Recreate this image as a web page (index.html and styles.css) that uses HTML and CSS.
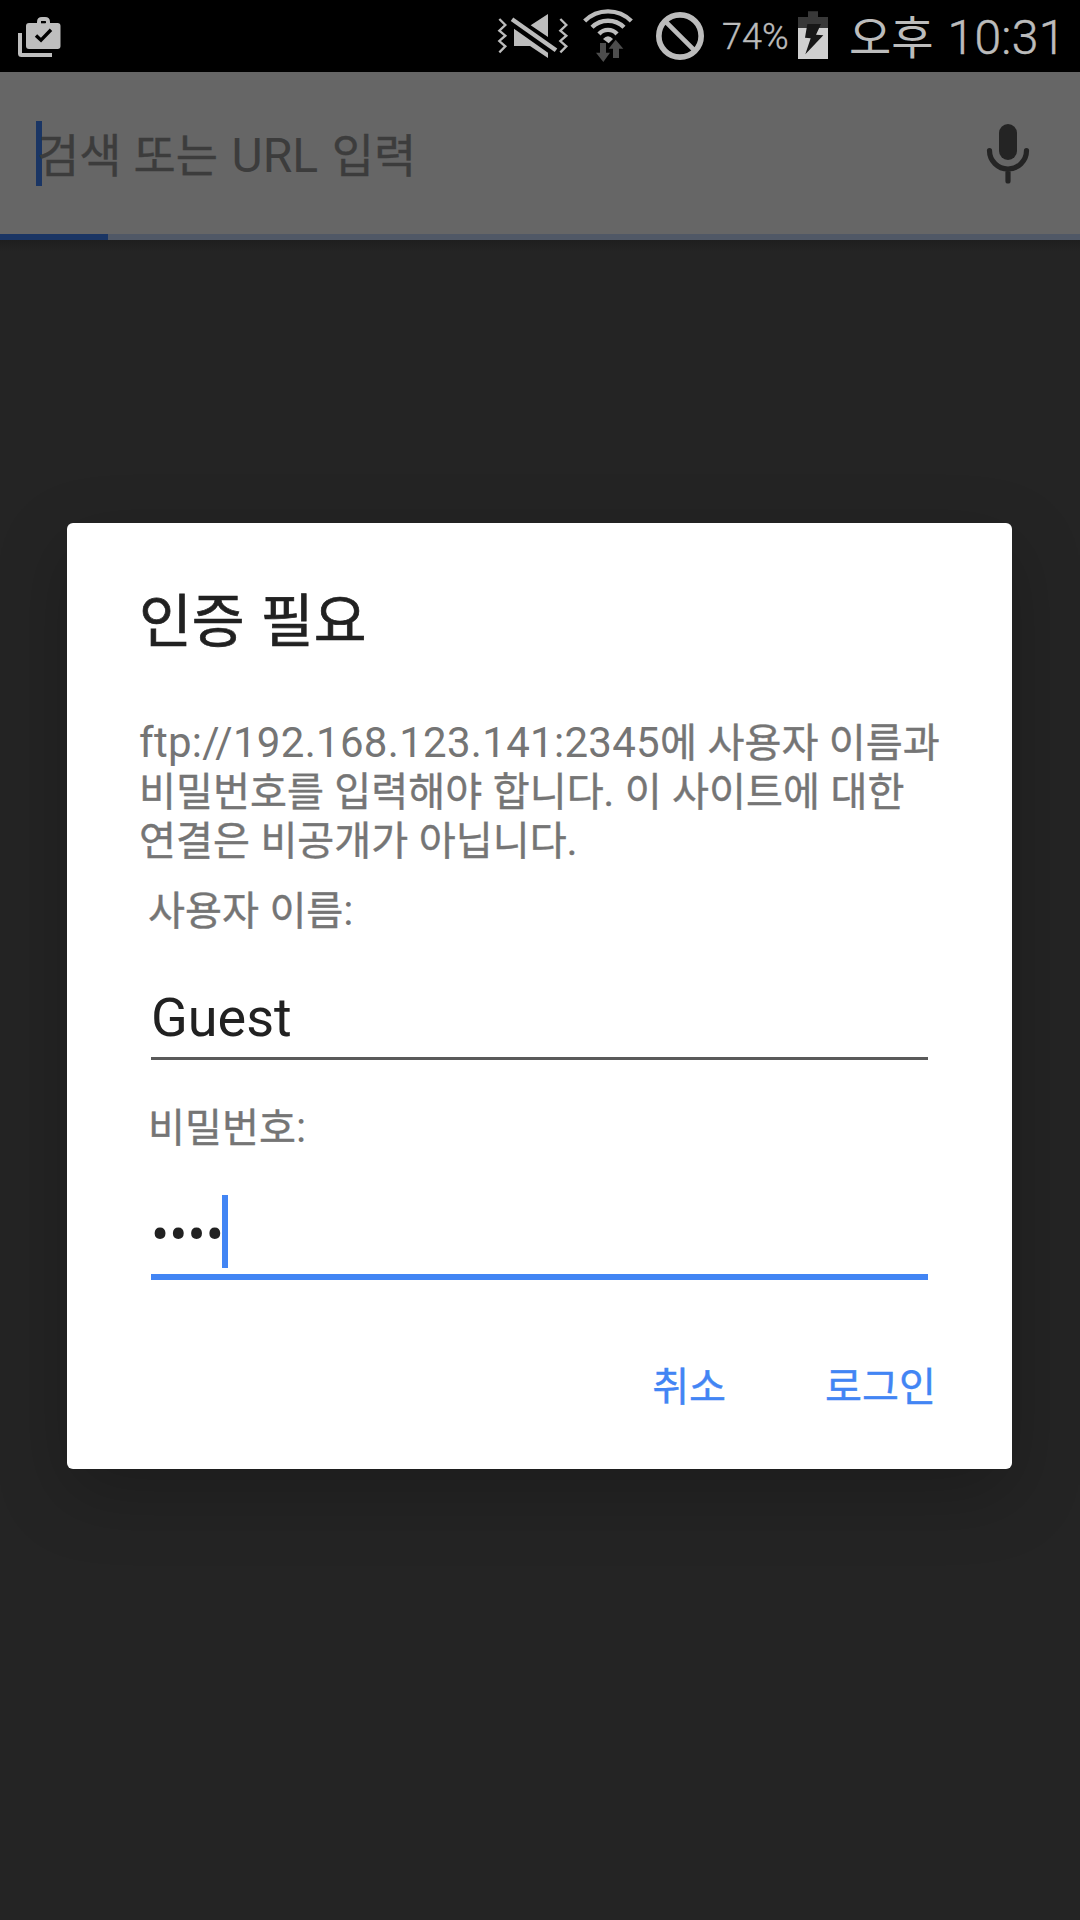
FILE: index.html
```html
<!DOCTYPE html>
<html lang="ko">
<head>
<meta charset="utf-8">
<title>인증 필요</title>
<link rel="stylesheet" href="styles.css">
</head>
<body>
<div class="screen">
  <header class="status">
    <svg class="status-shop" width="48" height="72" viewBox="16 0 48 72">
      <path d="M20 33V53.500Q20 55 21.500 55H52" fill="none" stroke="#bebebe" stroke-width="4"/>
      <path d="M39 25V22Q39 19 42 19H45Q48 19 48 22V25" fill="none" stroke="#bebebe" stroke-width="4"/>
      <rect x="26" y="23" width="34.500" height="26" rx="3" fill="#bebebe"/>
      <rect x="41" y="21" width="4.500" height="2.300" fill="#000"/>
      <path d="M36 35.500L41 40.200L51 29.800" fill="none" stroke="#000" stroke-width="3.400"/>
    </svg>
    <svg class="status-mute" width="74" height="72" viewBox="48 0 222 216">
      <g fill="none" stroke="#bcbcbc" stroke-width="7">
        <path d="M58 57L76 75L58 92L76 107L58 123L76 139L58 157"/>
        <path d="M241 57L259 75L241 92L259 107L241 123L259 139L241 157"/>
        <path d="M96 58L228 151" stroke-width="13"/>
      </g>
      <path d="M204 42V111L152 76ZM102 86L204 158V174L150 138H102Z" fill="#bcbcbc"/>
    </svg>
    <svg class="status-wifi" width="52" height="72" viewBox="306 0 156 216">
      <g fill="none" stroke="#bcbcbc" stroke-width="13">
        <path d="M314 63A99 99 0 0 1 454 63"/>
        <path d="M336 82A68 68 0 0 1 432 82"/>
        <path d="M357 102A36 36 0 0 1 411 102"/>
      </g>
      <path d="M369 117Q384 100 399 117L386 130Z" fill="#bcbcbc"/>
      <path d="M360 129H378V158H390L370 186L348 158H360ZM407 119L430 146H417V174H399V146H386Z" fill="#4d4d4d"/>
    </svg>
    <svg class="status-block" width="50" height="72" viewBox="525 0 150 216">
      <circle cx="600" cy="108" r="63.500" fill="none" stroke="#bcbcbc" stroke-width="17"/>
      <path d="M556 64L644 152" stroke="#bcbcbc" stroke-width="14"/>
    </svg>
    <span class="percent">74%</span>
    <svg width="32" height="72" viewBox="291 0 96 216">
      <path d="M324 34H354V51H384V84H294V51H324Z" fill="#383838"/>
      <path d="M294 84H384V177H294Z" fill="#cfcfcf"/>
      <path d="M322 72H363L348 104L370 106L316 163L332 115L315 113Z" fill="#171717"/>
    </svg>
    <span class="clock"><span class="ko">오후</span> 10:31</span>
  </header>
  <div class="omnibox">
    <span class="omnibox-caret"></span>
    <span class="hint"><span class="ko">검색 또는</span> URL <span class="ko">입력</span></span>
    <svg class="mic" width="48" height="72" viewBox="0 0 48 72">
      <rect x="15" y="6" width="18" height="36" rx="9" fill="#242424"/>
      <path d="M5.500 32.500A18.500 18.500 0 0 0 42.500 32.500M24 51V63" fill="none" stroke="#242424" stroke-width="5.200" stroke-linecap="round"/>
    </svg>
  </div>
  <div class="progress"><div class="progress-bar"></div></div>
  <main class="page">
    <section class="dialog">
      <h1 class="title">인증 필요</h1>
      <p class="message"><span class="url">ftp://192.168.123.141:2345</span><span class="ko">에 사용자 이름과<br>비밀번호를 입력해야 합니다. 이 사이트에 대한<br>연결은 비공개가 아닙니다.</span></p>
      <div class="label label-user"><span class="ko">사용자 이름</span>:</div>
      <div class="field field-user">Guest</div>
      <div class="label label-password"><span class="ko">비밀번호</span>:</div>
      <div class="field field-password"><span class="dots">••••</span><span class="field-caret"></span></div>
      <div class="actions"><span>취소</span><span>로그인</span></div>
    </section>
  </main>
</div>
</body>
</html>
```
FILE: styles.css
```css
* { box-sizing: border-box; }
body {
  margin: 0;
  background: #242424;
  font-family: Roboto, "Noto Sans CJK KR", sans-serif;
}
.screen {
  width: 1080px;
  height: 1920px;
  display: flex;
  flex-direction: column;
  overflow: hidden;
}
.ko {
  font-size: 0.957em;
  line-height: 0;
  word-spacing: 0.5px;
  -webkit-text-stroke: 0.4px currentColor;
}
.status {
  height: 72px;
  flex: none;
  display: flex;
  background: #000;
  color: #bcbcbc;
  white-space: nowrap;
}
.status svg { flex: none; }
.status-shop { margin-left: 16px; }
.status-mute { margin-left: 432px; }
.status-wifi { margin-left: 12px; }
.status-block { margin-left: 21px; }
.percent {
  width: 75px;
  margin-left: 17px;
  font-size: 36px;
  font-weight: 300;
  line-height: 75px;
  -webkit-text-stroke: 0.4px currentColor;
}
.clock {
  margin-left: 20px;
  font-size: 48px;
  font-weight: 300;
  line-height: 75px;
  word-spacing: 2px;
  letter-spacing: 0.3px;
  -webkit-text-stroke: 0.5px currentColor;
}
.clock .ko {
  font-weight: 400;
  letter-spacing: 0;
  -webkit-text-stroke-width: 0;
}
.omnibox {
  height: 162px;
  flex: none;
  display: flex;
  align-items: flex-start;
  padding: 46px 48px 0 36px;
  background: #666;
  color: #3c3c3c;
}
.omnibox-caret {
  width: 6px;
  height: 65px;
  margin-top: 3px;
  background: #1a3564;
}
.hint {
  flex: 1;
  margin-left: -5px;
  font-size: 48px;
  line-height: 75px;
  white-space: nowrap;
  word-spacing: 1.8px;
}
.progress {
  height: 6px;
  flex: none;
  background: #505866;
}
.progress-bar {
  width: 108px;
  height: 6px;
  background: #1a3564;
}
.page {
  flex: 1;
  padding: 283px 68px 0 67px;
  background: linear-gradient(#1e1e1e, #242424 12px);
}
.dialog {
  height: 946px;
  padding: 60px 72px 0;
  border-radius: 6px;
  background: #fff;
  color: #212121;
  box-shadow: 0 24px 72px rgba(0, 0, 0, 0.22);
}
.title {
  margin: 0;
  font-size: 57.4px;
  line-height: 80px;
  font-weight: 400;
  word-spacing: 2px;
  -webkit-text-stroke: 0.7px currentColor;
}
.message {
  margin: 55px 0 0;
  font-size: 42px;
  line-height: 49px;
  color: #757575;
  white-space: nowrap;
}
.url { letter-spacing: 0.3px; }
.label {
  padding-left: 9px;
  font-size: 42px;
  line-height: 49px;
  height: 49px;
  color: #757575;
}
.label-user { margin-top: 21px; }
.label-password { margin-top: 43px; }
.field {
  margin: 0 12px;
  display: flex;
  font-size: 54px;
  line-height: 73px;
}
.field-user {
  margin-top: 46px;
  height: 79px;
  border-bottom: 3px solid #5a5a5a;
}
.field-password {
  margin-top: 43px;
  height: 85px;
  border-bottom: 6px solid #4285f4;
}
.dots { padding-top: 3px; }
.field-caret {
  width: 6px;
  height: 73px;
  margin-left: -2px;
  background: #4285f4;
}
.actions {
  margin: 83px 4px 0 0;
  display: flex;
  justify-content: flex-end;
  gap: 99px;
  font-size: 40.2px;
  line-height: 49px;
  color: #4285f4;
  -webkit-text-stroke: 0.4px currentColor;
}
```
